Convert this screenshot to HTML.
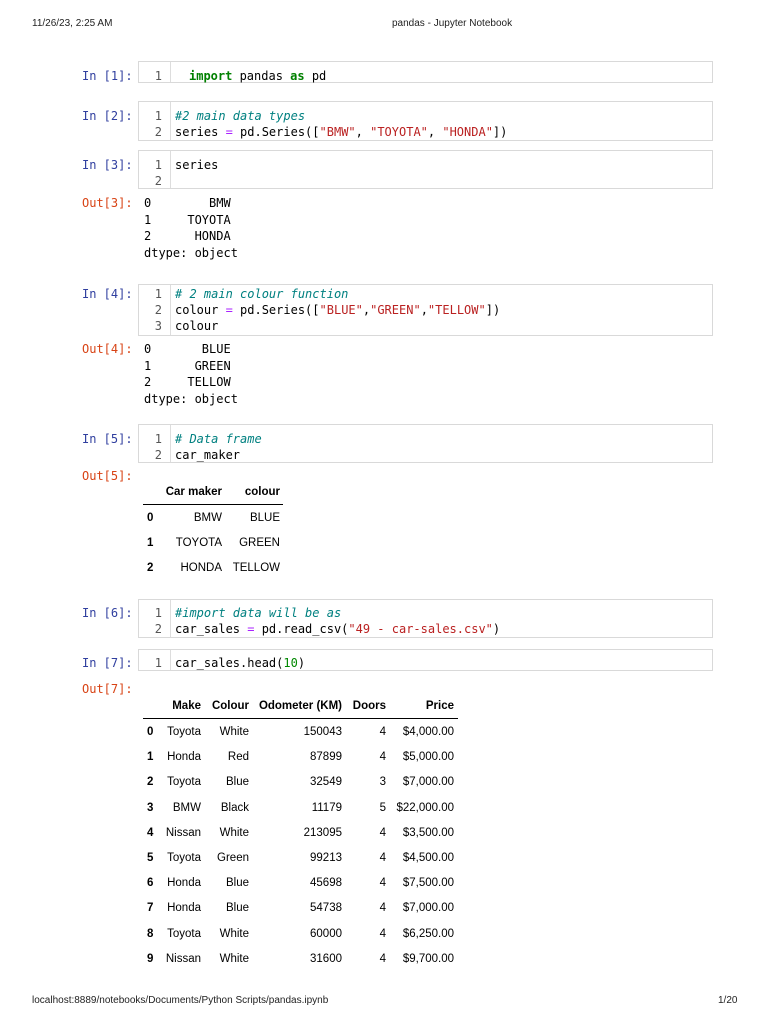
<!DOCTYPE html>
<html><head><meta charset="utf-8">
<style>
body{margin:0;width:768px;height:1024px;background:#fff;position:relative;overflow:hidden}
.a{position:absolute;white-space:pre}
.hd{font:10px "Liberation Sans",sans-serif;color:#222}
.lb{font:12px/16px "DejaVu Sans Mono",monospace;left:82px}
.in{color:#303f9f}
.out{color:#d84315}
.box{position:absolute;left:138px;width:573px;border:1px solid #d9d9d9;background:#fff}
.box .g{position:absolute;left:31px;top:0;bottom:0;border-left:1px solid #ddd}
.c{font:12px/16px "DejaVu Sans Mono",monospace;color:#000}
.n{font:12px/16px "DejaVu Sans Mono",monospace;color:#555;width:24px;text-align:right;left:138px}
.k{color:#008000;font-weight:bold}.o{color:#aa22ff}.s{color:#ba2121}.cm{color:#008080;font-style:italic}.nm{color:#080}
.t{font:11.5px/14px "Liberation Sans",sans-serif;color:#000;text-align:right}
.b{font-weight:bold}
.ln{position:absolute;height:1px;background:#000}
</style></head><body>
<div class="a hd" style="left:32px;top:18px">11/26/23, 2:25 AM</div>
<div class="a hd" style="left:392px;top:18px">pandas - Jupyter Notebook</div>

<div class="box" style="top:61px;height:20px"><div class="g"></div></div>
<div class="a lb in" style="top:68px">In [1]:</div>
<div class="a n" style="top:68px">1</div>
<div class="a c" style="left:189px;top:68px"><span class="k">import</span> pandas <span class="k">as</span> pd</div>

<div class="box" style="top:101px;height:38px"><div class="g"></div></div>
<div class="a lb in" style="top:108px">In [2]:</div>
<div class="a n" style="top:108px">1
2</div>
<div class="a c" style="left:175px;top:108px"><span class="cm">#2 main data types</span>
series <span class="o">=</span> pd.Series([<span class="s">"BMW"</span>, <span class="s">"TOYOTA"</span>, <span class="s">"HONDA"</span>])</div>

<div class="box" style="top:150px;height:37px"><div class="g"></div></div>
<div class="a lb in" style="top:157px">In [3]:</div>
<div class="a n" style="top:157px">1
2</div>
<div class="a c" style="left:175px;top:157px">series</div>
<div class="a lb out" style="top:195px">Out[3]:</div>
<div class="a c" style="left:144px;top:195px;line-height:16.7px">0        BMW
1     TOYOTA
2      HONDA
dtype: object</div>

<div class="box" style="top:284px;height:50px"><div class="g"></div></div>
<div class="a lb in" style="top:286px">In [4]:</div>
<div class="a n" style="top:286px">1
2
3</div>
<div class="a c" style="left:175px;top:286px"><span class="cm"># 2 main colour function</span>
colour <span class="o">=</span> pd.Series([<span class="s">"BLUE"</span>,<span class="s">"GREEN"</span>,<span class="s">"TELLOW"</span>])
colour</div>
<div class="a lb out" style="top:341px">Out[4]:</div>
<div class="a c" style="left:144px;top:341px;line-height:16.7px">0       BLUE
1      GREEN
2     TELLOW
dtype: object</div>

<div class="box" style="top:424px;height:37px"><div class="g"></div></div>
<div class="a lb in" style="top:431px">In [5]:</div>
<div class="a n" style="top:431px">1
2</div>
<div class="a c" style="left:175px;top:431px"><span class="cm"># Data frame</span>
car_maker</div>
<div class="a lb out" style="top:468px">Out[5]:</div>
<div class="a t b" style="left:150px;width:72px;top:485px">Car maker</div>
<div class="a t b" style="left:230px;width:50px;top:485px">colour</div>
<div class="ln" style="left:143px;width:140px;top:504px"></div>
<div class="a t b" style="left:147px;top:511px">0</div>
<div class="a t" style="left:150px;width:72px;top:511px">BMW</div>
<div class="a t" style="left:230px;width:50px;top:511px">BLUE</div>
<div class="a t b" style="left:147px;top:536px">1</div>
<div class="a t" style="left:150px;width:72px;top:536px">TOYOTA</div>
<div class="a t" style="left:230px;width:50px;top:536px">GREEN</div>
<div class="a t b" style="left:147px;top:561px">2</div>
<div class="a t" style="left:150px;width:72px;top:561px">HONDA</div>
<div class="a t" style="left:225px;width:55px;top:561px">TELLOW</div>

<div class="box" style="top:599px;height:37px"><div class="g"></div></div>
<div class="a lb in" style="top:605px">In [6]:</div>
<div class="a n" style="top:605px">1
2</div>
<div class="a c" style="left:175px;top:605px"><span class="cm">#import data will be as</span>
car_sales <span class="o">=</span> pd.read_csv(<span class="s">"49 - car-sales.csv"</span>)</div>

<div class="box" style="top:649px;height:20px"><div class="g"></div></div>
<div class="a lb in" style="top:655px">In [7]:</div>
<div class="a n" style="top:655px">1</div>
<div class="a c" style="left:175px;top:655px">car_sales.head(<span class="nm">10</span>)</div>
<div class="a lb out" style="top:681px">Out[7]:</div>

<div class="a t b" style="left:160px;width:41px;top:699px">Make</div>
<div class="a t b" style="left:205px;width:44px;top:699px">Colour</div>
<div class="a t b" style="left:255px;width:87px;top:699px">Odometer (KM)</div>
<div class="a t b" style="left:345px;width:41px;top:699px">Doors</div>
<div class="a t b" style="left:390px;width:64px;top:699px">Price</div>
<div class="ln" style="left:143px;width:315px;top:718px"></div>

<div class="a t b" style="left:147px;top:720px;line-height:25.2px;text-align:left">0
1
2
3
4
5
6
7
8
9</div>
<div class="a t" style="left:150px;width:51px;top:720px;line-height:25.2px">Toyota
Honda
Toyota
BMW
Nissan
Toyota
Honda
Honda
Toyota
Nissan</div>
<div class="a t" style="left:205px;width:44px;top:720px;line-height:25.2px">White
Red
Blue
Black
White
Green
Blue
Blue
White
White</div>
<div class="a t" style="left:260px;width:82px;top:720px;line-height:25.2px">150043
87899
32549
11179
213095
99213
45698
54738
60000
31600</div>
<div class="a t" style="left:350px;width:36px;top:720px;line-height:25.2px">4
4
3
5
4
4
4
4
4
4</div>
<div class="a t" style="left:390px;width:64px;top:720px;line-height:25.2px">$4,000.00
$5,000.00
$7,000.00
$22,000.00
$3,500.00
$4,500.00
$7,500.00
$7,000.00
$6,250.00
$9,700.00</div>

<div class="a hd" style="left:32px;top:995px">localhost:8889/notebooks/Documents/Python Scripts/pandas.ipynb</div>
<div class="a hd" style="left:718px;top:995px">1/20</div>
</body></html>
